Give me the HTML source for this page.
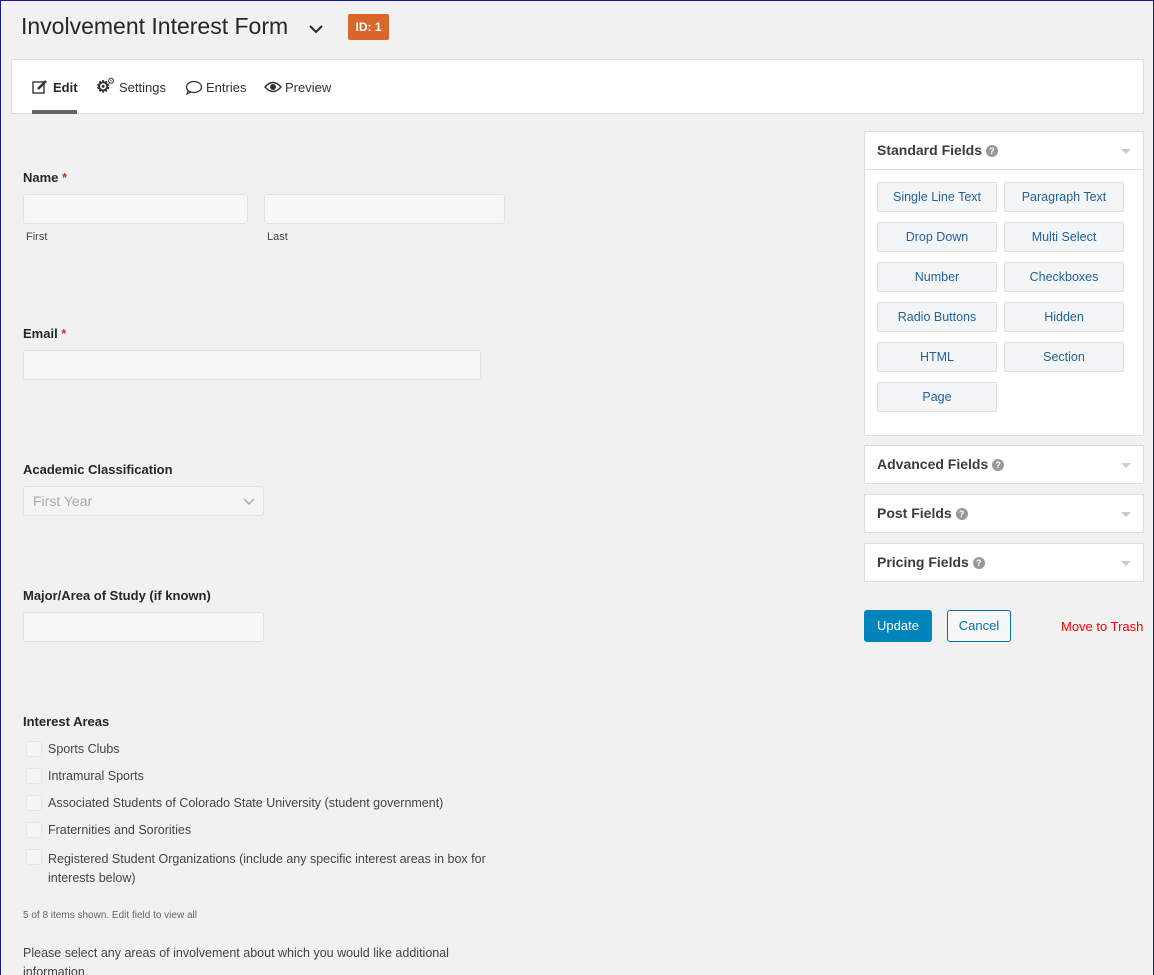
<!DOCTYPE html>
<html><head><style>
*{box-sizing:border-box;margin:0;padding:0}
html,body{width:1154px;height:975px;overflow:hidden}
body{background:#f1f1f1;font-family:"Liberation Sans",sans-serif;color:#23282d;position:relative}
.frame{position:absolute;left:0;top:0;width:1154px;height:980px;border:1px solid #1a1a8c;pointer-events:none}
.a{position:absolute}
.lbl{font-weight:bold;font-size:13px;color:#23282d}
.req{color:#c0392b}
.inp{position:absolute;background:#f7f7f7;border:1px solid #e2e2e2;border-radius:3px;height:30px}
.sub{font-size:11px;color:#444}
.cb{position:absolute;left:26px;width:16px;height:16px;border:1px solid #e6e6e6;border-radius:3px;background:#f5f5f5}
.ct{position:absolute;left:48px;font-size:12.5px;color:#444}
.panel{position:absolute;left:864px;width:280px;background:#fff;border:1px solid #ddd}
.ph{height:38px;padding:10px 12px;font-weight:bold;font-size:14px;color:#3c3c3c;position:relative}
.q{display:inline-block;width:12px;height:12px;border-radius:50%;background:#999;color:#fff;font-size:9px;text-align:center;line-height:12px;vertical-align:1px}
.tri{position:absolute;right:12px;top:17px;border:5px solid transparent;border-top:5px solid #ccc;border-bottom:none}
.btn{position:absolute;width:120px;height:30px;background:#f4f5f6;border:1px solid #ddd;border-radius:2px;font-size:12.5px;color:#20639b;text-align:center;line-height:28px}
</style></head><body>
<div class="a" style="left:21px;top:13px;font-size:23px;color:#23282d">Involvement Interest Form</div>
<svg class="a" style="left:309px;top:24px" width="14" height="10"><path d="M1 2 L7 8 L13 2" stroke="#23282d" stroke-width="2" fill="none"/></svg>
<div class="a" style="left:348px;top:14px;width:41px;height:26px;background:#d9662a;border-radius:2px;color:#fff;font-weight:bold;font-size:12px;text-align:center;line-height:26px">ID: 1</div>
<div class="a" style="left:11px;top:59px;width:1133px;height:55px;background:#fff;border:1px solid #ddd"></div>
<svg class="a" style="left:32px;top:79px" width="16" height="16"><rect x="1" y="3" width="11" height="11" fill="none" stroke="#333" stroke-width="1.4"/><path d="M6 10 L14 2" stroke="#333" stroke-width="2.5"/></svg>
<div class="a" style="left:53px;top:80px;font-size:13px;font-weight:bold">Edit</div>
<div class="a" style="left:32px;top:110px;width:45px;height:4px;background:#666"></div>
<div class="a" style="left:96px;top:77px;font-size:16px;font-weight:bold;color:#333">⚙</div>
<div class="a" style="left:107px;top:76px;font-size:9px;color:#333">⚙</div>
<div class="a" style="left:119px;top:80px;font-size:13px;color:#333">Settings</div>
<svg class="a" style="left:185px;top:80px" width="18" height="15"><ellipse cx="9" cy="7" rx="7.5" ry="5.5" fill="none" stroke="#333" stroke-width="1.3"/><path d="M3 11 L2 14 L6 12" fill="none" stroke="#333" stroke-width="1.2"/></svg>
<div class="a" style="left:206px;top:80px;font-size:13px;color:#333">Entries</div>
<svg class="a" style="left:264px;top:81px" width="18" height="12"><path d="M1 6 Q9 -3 17 6 Q9 15 1 6Z" fill="none" stroke="#333" stroke-width="1.4"/><circle cx="9" cy="6" r="3" fill="#333"/></svg>
<div class="a" style="left:285px;top:80px;font-size:13px;color:#333">Preview</div>

<div class="a lbl" style="left:23px;top:170px">Name <span class="req">*</span></div>
<div class="inp" style="left:23px;top:194px;width:225px"></div>
<div class="inp" style="left:264px;top:194px;width:241px"></div>
<div class="a sub" style="left:26px;top:231px">First</div>
<div class="a sub" style="left:267px;top:231px">Last</div>
<div class="a lbl" style="left:23px;top:326px">Email <span class="req">*</span></div>
<div class="inp" style="left:23px;top:350px;width:458px"></div>
<div class="a lbl" style="left:23px;top:462px">Academic Classification</div>
<div class="inp" style="left:23px;top:486px;width:241px;background:#f4f4f4"><span style="position:absolute;left:9px;top:6px;font-size:14px;color:#aaa">First Year</span><svg style="position:absolute;right:8px;top:11px" width="12" height="8"><path d="M1 1 L6 6 L11 1" stroke="#aaa" stroke-width="1.5" fill="none"/></svg></div>
<div class="a lbl" style="left:23px;top:588px">Major/Area of Study (if known)</div>
<div class="inp" style="left:23px;top:612px;width:241px"></div>
<div class="a lbl" style="left:23px;top:714px">Interest Areas</div>
<div class="cb" style="top:741px"></div><div class="ct" style="top:742px">Sports Clubs</div>
<div class="cb" style="top:768px"></div><div class="ct" style="top:769px">Intramural Sports</div>
<div class="cb" style="top:795px"></div><div class="ct" style="top:796px">Associated Students of Colorado State University (student government)</div>
<div class="cb" style="top:822px"></div><div class="ct" style="top:823px">Fraternities and Sororities</div>
<div class="cb" style="top:849px"></div><div class="ct" style="top:850px;line-height:19px;width:470px">Registered Student Organizations (include any specific interest areas in box for interests below)</div>
<div class="a" style="left:23px;top:910px;font-size:10px;color:#666">5 of 8 items shown. Edit field to view all</div>
<div class="a" style="left:23px;top:944px;font-size:12.5px;color:#444;line-height:19px;width:460px">Please select any areas of involvement about which you would like additional information.</div>

<div class="panel" style="top:131px;height:305px"><div class="ph" style="border-bottom:1px solid #ddd">Standard Fields <span class="q">?</span><span class="tri"></span></div></div>
<div class="btn" style="left:877px;top:182px">Single Line Text</div><div class="btn" style="left:1004px;top:182px">Paragraph Text</div>
<div class="btn" style="left:877px;top:222px">Drop Down</div><div class="btn" style="left:1004px;top:222px">Multi Select</div>
<div class="btn" style="left:877px;top:262px">Number</div><div class="btn" style="left:1004px;top:262px">Checkboxes</div>
<div class="btn" style="left:877px;top:302px">Radio Buttons</div><div class="btn" style="left:1004px;top:302px">Hidden</div>
<div class="btn" style="left:877px;top:342px">HTML</div><div class="btn" style="left:1004px;top:342px">Section</div>
<div class="btn" style="left:877px;top:382px">Page</div>
<div class="panel" style="top:445px;height:39px"><div class="ph">Advanced Fields <span class="q">?</span><span class="tri"></span></div></div>
<div class="panel" style="top:494px;height:39px"><div class="ph">Post Fields <span class="q">?</span><span class="tri"></span></div></div>
<div class="panel" style="top:543px;height:39px"><div class="ph">Pricing Fields <span class="q">?</span><span class="tri"></span></div></div>
<div class="a" style="left:864px;top:610px;width:68px;height:32px;background:#0085ba;border-radius:3px;color:#fff;font-size:13px;text-align:center;line-height:32px">Update</div>
<div class="a" style="left:947px;top:610px;width:64px;height:32px;background:#f7f7f7;border:1px solid #0073aa;border-radius:3px;color:#0073aa;font-size:13px;text-align:center;line-height:30px">Cancel</div>
<div class="a" style="left:1061px;top:619px;font-size:13px;color:#ff0000">Move to Trash</div>
<div class="frame"></div>
</body></html>
